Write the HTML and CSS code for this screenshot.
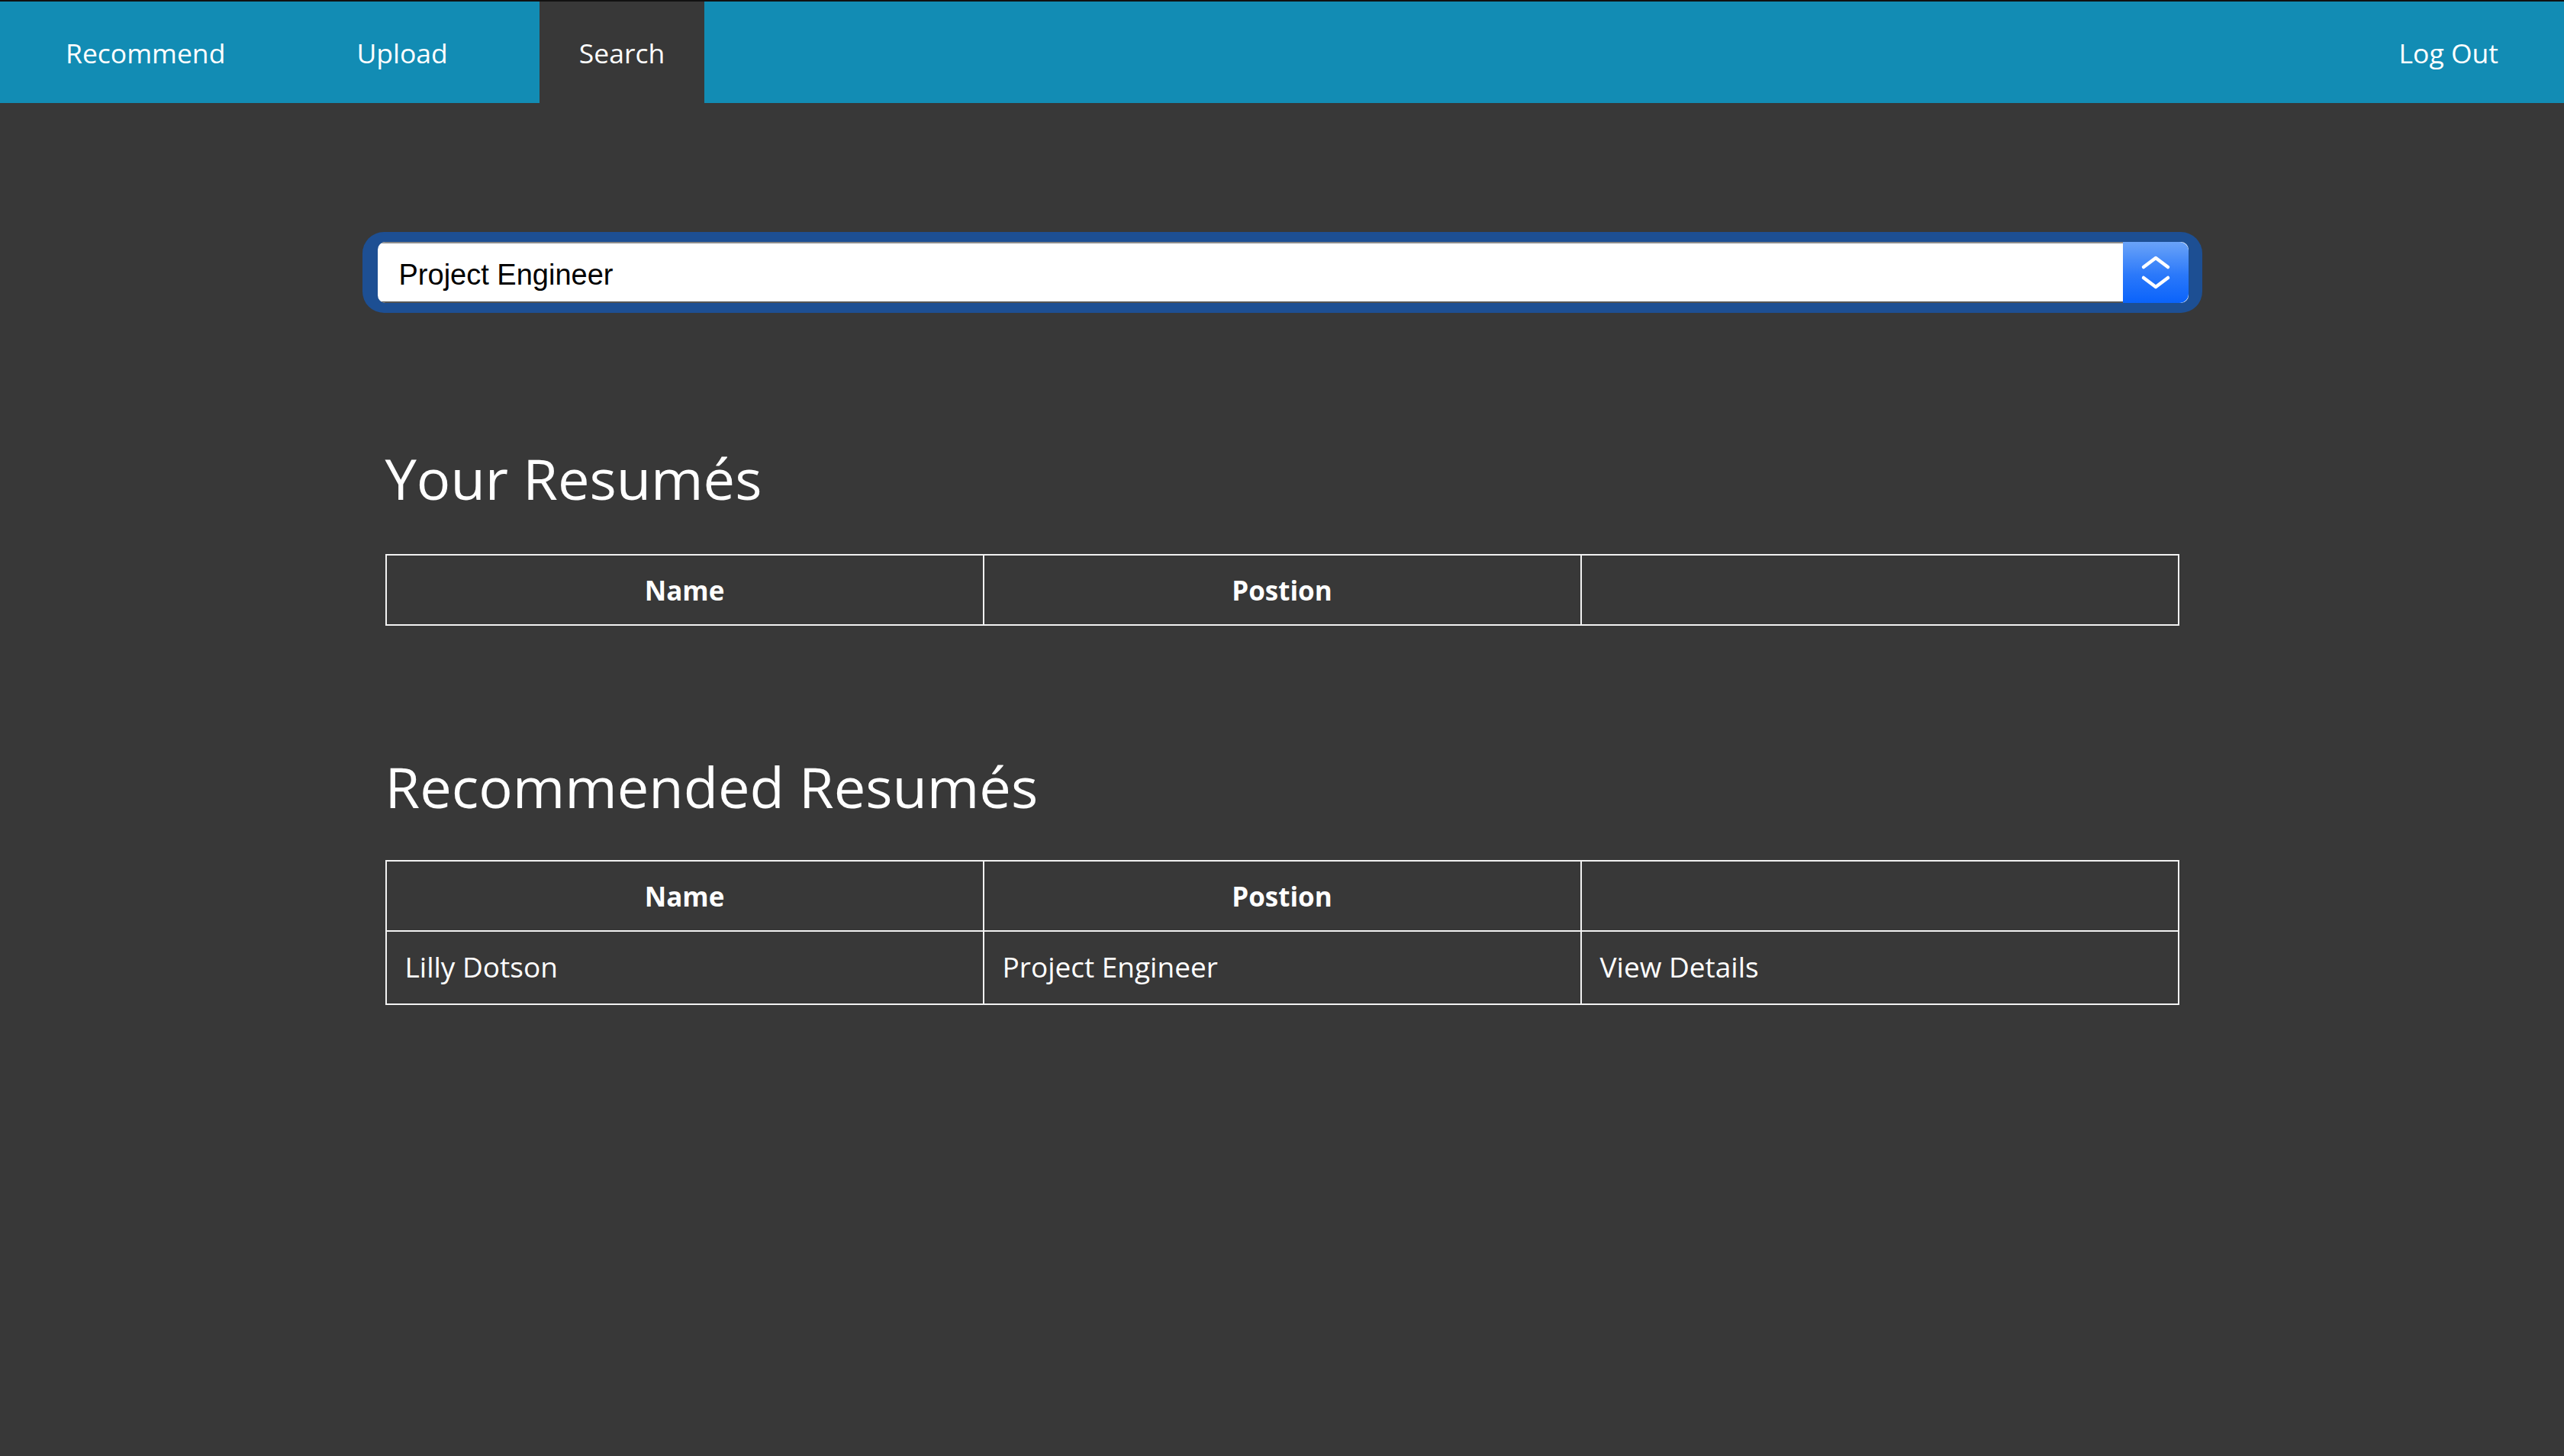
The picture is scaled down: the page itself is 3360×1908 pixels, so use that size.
FILE: index.html
```html
<!DOCTYPE html>
<html>
<head>
<meta charset="utf-8">
<link rel="stylesheet" href="styles.css">
</head>
<body>
<nav class="topnav">
  <a class="nav-item">Recommend</a>
  <a class="nav-item">Upload</a>
  <a class="nav-item active">Search</a>
  <span class="nav-spacer"></span>
  <a class="nav-item">Log Out</a>
</nav>
<main class="content">
  <div class="select-ring">
    <div class="select-box">
      <span class="select-value">Project Engineer</span>
      <span class="select-btn">
        <svg width="40" height="48" viewBox="0 0 40 48">
          <path d="M4 17 L20 5 L36 17" fill="none" stroke="#fff" stroke-width="4.5" stroke-linecap="round" stroke-linejoin="round"/>
          <path d="M4 31 L20 43 L36 31" fill="none" stroke="#fff" stroke-width="4.5" stroke-linecap="round" stroke-linejoin="round"/>
        </svg>
      </span>
    </div>
  </div>
  <section class="block">
    <h2 class="heading">Your Resumés</h2>
    <table class="grid">
      <tr><th>Name</th><th>Postion</th><th></th></tr>
    </table>
  </section>
  <section class="block second">
    <h2 class="heading">Recommended Resumés</h2>
    <table class="grid">
      <tr><th>Name</th><th>Postion</th><th></th></tr>
      <tr><td>Lilly Dotson</td><td>Project Engineer</td><td>View Details</td></tr>
    </table>
  </section>
</main>
</body>
</html>
```
FILE: styles.css
```css
html, body {
  margin: 0;
  padding: 0;
  background: #383838;
  height: 100%;
}
body {
  font-family: "Open Sans", "DejaVu Sans", sans-serif;
  color: #ffffff;
}
.topnav {
  display: flex;
  align-items: stretch;
  height: 133px;
  background: #128cb4;
  border-top: 2px solid #111;
}
.nav-item {
  display: flex;
  align-items: center;
  padding: 0 52px;
  margin: 0 34px;
  font-size: 35.5px;
  color: #fff;
}
.nav-item.active {
  background: #383838;
}
.nav-spacer {
  flex: 1;
}
.content {
  display: flex;
  flex-direction: column;
  align-items: center;
}
.select-ring {
  margin-top: 169px;
  width: 2373px;
  padding: 13px 18px 13px 20px;
  background: #1d4f93;
  border-radius: 28px;
}
.select-box {
  display: flex;
  height: 80px;
  border-radius: 10px;
  overflow: hidden;
  background: #fff;
}
.select-value {
  flex: 1;
  display: flex;
  align-items: center;
  padding: 6px 0 0 28px;
  font-family: "Liberation Sans", Arial, sans-serif;
  font-size: 38px;
  color: #000;
  border-top: 2px solid #8c8c8c;
  border-bottom: 2px solid #555;
}
.select-btn {
  width: 86px;
  display: flex;
  align-items: center;
  justify-content: center;
  background: linear-gradient(#6aa3f8, #2a78fa 55%, #0a63fb);
  border-radius: 0 12px 12px 0;
}
.block {
  width: 2351px;
  margin-top: 180px;
}
.block.second {
  margin-top: 174px;
}
.heading {
  margin: 0 0 62px 0;
  font-size: 74px;
  line-height: 74px;
  font-weight: 400;
}
.second .heading {
  margin-bottom: 59px;
}
.grid {
  width: 100%;
  border-collapse: collapse;
  table-layout: fixed;
}
.grid th, .grid td {
  border: 2px solid #f2f2f2;
  height: 90px;
  font-size: 37px;
  padding: 0 24px;
}
.grid th {
  font-size: 35px;
  font-weight: 700;
  text-align: center;
}
.grid td {
  text-align: left;
  font-weight: 400;
  padding-bottom: 4px;
}
```
